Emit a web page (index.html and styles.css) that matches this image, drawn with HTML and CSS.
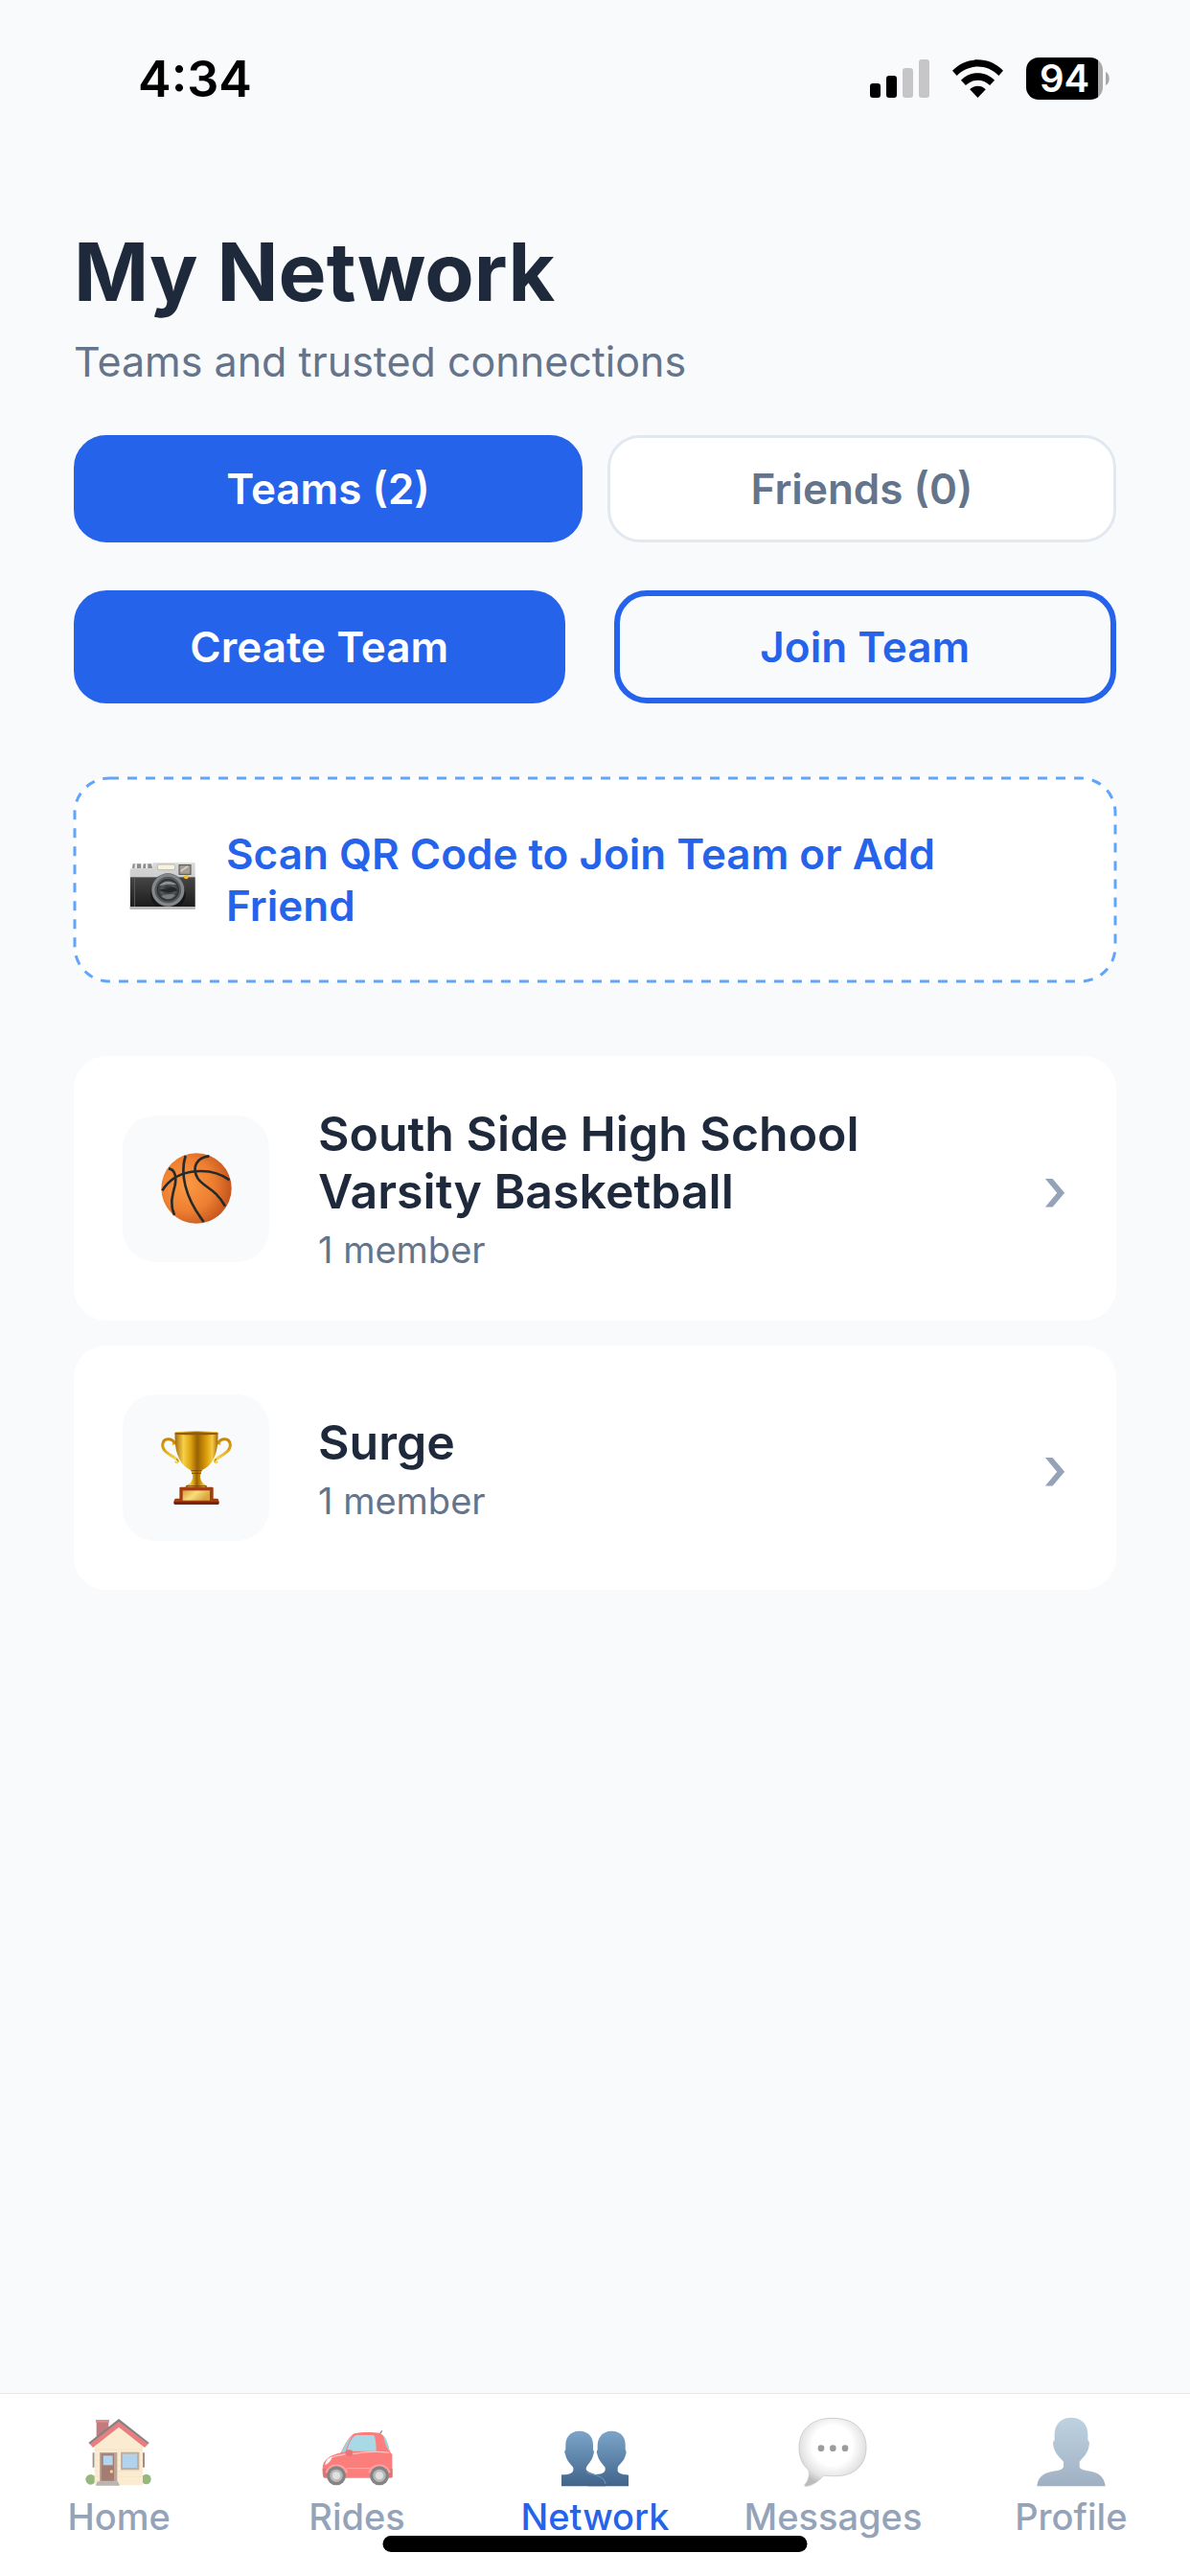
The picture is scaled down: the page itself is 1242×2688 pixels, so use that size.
FILE: index.html
```html
<!DOCTYPE html>
<html lang="en">
<head>
    <meta charset="UTF-8">
    <meta name="viewport" content="width=device-width, initial-scale=1.0">
    <title>My Network</title>
    <link rel="stylesheet" href="styles.css">
</head>
<body>
<header class="status-bar">
    <span class="time">4:34</span>
    <div class="status-icons">
        <svg class="signal" viewBox="0 0 62 40">
            <rect x="0" y="25" width="11" height="15" rx="3"/>
            <rect x="17" y="17" width="11" height="23" rx="3"/>
            <rect class="off" x="34" y="9" width="11" height="31" rx="3"/>
            <rect class="off" x="51" y="0" width="11" height="40" rx="3"/>
        </svg>
        <svg class="wifi" viewBox="402 66 160 120">
            <path d="M402 101C446 55 518 55 562 101L548 117C511 79 453 79 416 117Z"/>
            <path d="M429 131C458 101 506 101 535 131L520 147C498 126 466 126 444 147Z"/>
            <path d="M457 160C471 146 493 146 507 160L482 186Z"/>
        </svg>
        <div class="battery">
            <span class="battery-level">94</span>
            <svg class="battery-tip" viewBox="0 0 4 14"><path d="M0 0C5 2 5 12 0 14Z"/></svg>
        </div>
    </div>
</header>

<main class="content">
    <h1>My Network</h1>
    <p class="subtitle">Teams and trusted connections</p>

    <div class="tabs">
        <button class="tab active" type="button">Teams (2)</button>
        <button class="tab" type="button">Friends (0)</button>
    </div>

    <div class="actions">
        <button class="btn btn-primary" type="button">Create Team</button>
        <button class="btn btn-outline" type="button">Join Team</button>
    </div>

    <button class="scan" type="button">
        <svg class="scan-border" aria-hidden="true"><rect x="0" y="0" width="100%" height="100%" rx="36"/></svg>
        <svg class="camera" viewBox="54 84 252 183" aria-hidden="true">
            <defs>
                <linearGradient id="camTop" x1="0" y1="0" x2="0" y2="1">
                    <stop offset="0" stop-color="#d9d9d9"/>
                    <stop offset="1" stop-color="#b4b4b4"/>
                </linearGradient>
                <linearGradient id="camBody" x1="0" y1="0" x2="0" y2="1">
                    <stop offset="0" stop-color="#464646"/>
                    <stop offset="1" stop-color="#1c1c1c"/>
                </linearGradient>
                <radialGradient id="lens">
                    <stop offset="0" stop-color="#222"/>
                    <stop offset="0.6" stop-color="#55585a"/>
                    <stop offset="1" stop-color="#2b2d2f"/>
                </radialGradient>
            </defs>
            <path d="M86 124H112V140H84ZM119 124H144L148 140H117Z" fill="#8c8c8c"/>
            <path d="M92 124H99V140H91ZM126 124H133V140H126Z" fill="#e8e8e8"/>
            <path d="M77 144Q77 138 85 138H148V121H281V266H77Z" fill="url(#camTop)"/>
            <rect x="78" y="166" width="203" height="92" fill="url(#camBody)"/>
            <rect x="90" y="166" width="3" height="92" fill="#5a5a5a"/>
            <rect x="77" y="258" width="204" height="8" fill="#b9b9b9"/>
            <rect x="163" y="126" width="55" height="17" rx="5" fill="#f6f2df" stroke="#a5a39a" stroke-width="2"/>
            <rect x="231" y="128" width="36" height="29" fill="#a79f96" stroke="#4c4c4c" stroke-width="3"/>
            <path d="M236 147L258 132" stroke="#d5cdc3" stroke-width="5"/>
            <path d="M145 200a51 51 0 0 0 15 58h74a51 51 0 0 0 13-58Z" fill="#161616"/>
            <circle cx="196" cy="206" r="52" fill="#56595c"/>
            <circle cx="196" cy="206" r="46" fill="none" stroke="#85888b" stroke-width="9"/>
            <circle cx="196" cy="206" r="35" fill="url(#lens)"/>
            <path d="M168 193C180 176 207 174 223 190C207 187 187 187 168 193Z" fill="#8d9396"/>
            <path d="M175 226C187 219 207 217 219 222C208 238 188 238 175 226Z" fill="#777d80"/>
            <path d="M168 207C181 199 190 212 202 197C214 195 221 200 226 207C207 216 188 214 168 207Z" fill="#24272a"/>
            <circle cx="253" cy="165" r="7" fill="#fbbf1d"/>
        </svg>
        <span class="scan-text">Scan QR Code to Join Team or Add Friend</span>
    </button>

    <div class="team-list">
        <a class="team" href="#south-side">
            <span class="team-icon">
                <svg class="ball" viewBox="139 161 222 222" aria-hidden="true">
                    <defs>
                        <radialGradient id="ballFill" cx="0.36" cy="0.45" r="0.68">
                            <stop offset="0" stop-color="#fc9a45"/>
                            <stop offset="0.55" stop-color="#ee7f31"/>
                            <stop offset="1" stop-color="#bf501b"/>
                        </radialGradient>
                    </defs>
                    <circle cx="250" cy="272" r="110" fill="url(#ballFill)"/>
                    <g fill="none" stroke="#252a2a" stroke-width="8">
                        <path d="M143 279C160 251 189 229 230 221C278 213 321 222 354 246"/>
                        <path d="M216 170C199 223 212 298 273 377"/>
                        <path d="M163 210C183 212 189 237 182 266C172 303 168 326 181 356"/>
                        <path d="M290 171C251 175 234 206 254 240C272 269 309 271 340 328"/>
                    </g>
                </svg>
            </span>
            <span class="team-info">
                <span class="team-name">South Side High School Varsity Basketball</span>
                <span class="team-members">1 member</span>
            </span>
            <span class="chevron">›</span>
        </a>
        <a class="team" href="#surge">
            <span class="team-icon">
                <svg class="trophy" viewBox="135 145 228 234" aria-hidden="true">
                    <defs>
                        <linearGradient id="cup">
                            <stop offset="0" stop-color="#a66b08"/>
                            <stop offset="0.2" stop-color="#f5d04a"/>
                            <stop offset="0.36" stop-color="#e0a512"/>
                            <stop offset="0.52" stop-color="#996104"/>
                            <stop offset="0.72" stop-color="#d99a08"/>
                            <stop offset="0.87" stop-color="#f4ca42"/>
                            <stop offset="1" stop-color="#a16807"/>
                        </linearGradient>
                        <linearGradient id="handle" x1="0" y1="0" x2="0" y2="1">
                            <stop offset="0" stop-color="#c68708"/>
                            <stop offset="0.5" stop-color="#dba216"/>
                            <stop offset="1" stop-color="#f7d954"/>
                        </linearGradient>
                        <linearGradient id="plate" x1="0" y1="0" x2="1" y2="0.4">
                            <stop offset="0" stop-color="#d6a23b"/>
                            <stop offset="0.5" stop-color="#f9dc7d"/>
                            <stop offset="1" stop-color="#d9a43c"/>
                        </linearGradient>
                    </defs>
                    <g fill="none" stroke="url(#handle)" stroke-linecap="round">
                        <path d="M181 184C172 167 146 166 143 188C142 210 164 217 188 235" stroke-width="9"/>
                        <path d="M317 184C326 167 352 166 355 188C356 210 334 217 310 235" stroke-width="9"/>
                        <path d="M188 235C196 240 190 249 184 243M310 235C302 240 308 249 314 243" stroke-width="5"/>
                        <path d="M181 184L175 188M317 184L323 188" stroke-width="6"/>
                    </g>
                    <path d="M182 150H316C319 202 307 250 266 269H232C191 250 179 202 182 150Z" fill="url(#cup)"/>
                    <path d="M182 151Q249 144 316 151V156Q249 160 182 156Z" fill="#8f5a05"/>
                    <path d="M183 150Q249 144 315 150" fill="none" stroke="#e9bb35" stroke-width="3"/>
                    <path d="M232 267H266L264 276C258 286 262 301 270 309L282 318V326H215V318L229 309C237 301 240 286 234 276Z" fill="url(#cup)"/>
                    <path d="M232 270H266M234 278H264M217 318H280" stroke="#7c4a04" stroke-width="3"/>
                    <path d="M196 323Q196 321 200 321H298Q302 321 302 325V357H314Q320 359 320 371Q320 376 315 376H183Q178 376 178 371Q178 359 184 357H196Z" fill="#a23c11"/>
                    <path d="M179 367H319V372Q319 376 315 376H183Q179 376 179 372Z" fill="#74250a"/>
                    <rect x="206" y="332" width="85" height="31" fill="url(#plate)"/>
                </svg>
            </span>
            <span class="team-info">
                <span class="team-name">Surge</span>
                <span class="team-members">1 member</span>
            </span>
            <span class="chevron">›</span>
        </a>
    </div>
</main>

<nav class="tab-bar">
    <a class="nav-item" href="#home">
        <svg class="nav-icon" viewBox="258 126 228 219" aria-hidden="true">
            <ellipse cx="284" cy="322" rx="16" ry="16" fill="#4f8a2a"/>
            <ellipse cx="458" cy="321" rx="15" ry="16" fill="#4f8a2a"/>
            <path d="M290 238H296V284H290ZM447 238H453V284H447Z" fill="#5f463c"/>
            <rect x="302" y="136" width="38" height="60" fill="#9c2624"/>
            <rect x="300" y="135" width="42" height="8" fill="#c14340"/>
            <path d="M296 205L373 146L447 205V340H296Z" fill="#f7dfb4"/>
            <path d="M296 228H447M296 245H447M296 262H447M296 279H447M296 296H447M296 313H447" stroke="#ecd1a0" stroke-width="2"/>
            <path d="M372 132L467 207L460 214L372 145L285 214L277 207Z" fill="#303234"/>
            <path d="M372 141L464 211L453 222L372 158L291 222L281 211Z" fill="#d9292c"/>
            <rect x="312" y="237" width="55" height="92" fill="#8f6c55"/>
            <rect x="317" y="241" width="40" height="85" fill="#6b2615"/>
            <rect x="323" y="247" width="30" height="30" fill="#7fbbe2"/>
            <circle cx="349" cy="297" r="5" fill="#f0b93b"/>
            <rect x="378" y="236" width="58" height="56" fill="#9a795e"/>
            <rect x="384" y="242" width="45" height="43" fill="#82b5de"/>
            <path d="M305 328H369L375 341H300Z" fill="#8b8580"/>
        </svg>
        <span>Home</span>
    </a>
    <a class="nav-item" href="#rides">
        <svg class="nav-icon" viewBox="1002 126 228 219" aria-hidden="true">
            <path d="M1184 183L1193 169" stroke="#333" stroke-width="4"/>
            <path d="M1064 238C1078 210 1089 188 1106 178C1130 173 1164 173 1187 177C1202 184 1211 207 1218 235L1225 244V312Q1225 317 1218 317H1013Q1007 313 1007 303V288C1007 262 1026 247 1064 238Z" fill="#f92a28"/>
            <path d="M1083 233C1091 205 1100 188 1112 183H1166C1172 183 1175 214 1175 233Z" fill="#6fc0d6"/>
            <path d="M1066 236C1078 211 1090 191 1102 184C1092 198 1083 218 1079 236Z" fill="#5ab7cb"/>
            <path d="M1197 184C1209 197 1214 216 1216 235C1206 220 1200 201 1197 184Z" fill="#5ab7cb"/>
            <path d="M1020 262C1050 239 1098 244 1128 238C1160 234 1194 235 1216 238" fill="none" stroke="#ff9896" stroke-width="4"/>
            <path d="M1082 287H1156" stroke="#ff8080" stroke-width="3"/>
            <path d="M1015 277C1016 262 1025 253 1037 251C1034 263 1026 271 1015 277Z" fill="#f0f0f0"/>
            <ellipse cx="1090" cy="239" rx="12" ry="10" fill="#df191c"/>
            <path d="M1007 289H1020V316H1010ZM1214 289H1226V316H1216Z" fill="#c51b1b"/>
            <path d="M1015 301A37 34 0 0 1 1087 301ZM1149 301A37 34 0 0 1 1221 301Z" fill="#ff6262"/>
            <circle cx="1050" cy="310" r="30" fill="#333"/>
            <circle cx="1185" cy="310" r="30" fill="#333"/>
            <circle cx="1050" cy="310" r="20" fill="#8c8c8c"/>
            <circle cx="1185" cy="310" r="20" fill="#8c8c8c"/>
            <circle cx="1050" cy="310" r="12" fill="#ccc"/>
            <circle cx="1185" cy="310" r="12" fill="#ccc"/>
        </svg>
        <span>Rides</span>
    </a>
    <a class="nav-item active" href="#network">
        <svg class="nav-icon" viewBox="548 126 228 219" aria-hidden="true">
            <defs>
                <linearGradient id="people" gradientUnits="userSpaceOnUse" x1="0" y1="170" x2="0" y2="343">
                    <stop offset="0" stop-color="#7ba5c9"/>
                    <stop offset="1" stop-color="#41648a"/>
                </linearGradient>
            </defs>
            <path d="M714 170C741 170 757 188 757 213V229Q762 234 758 244C754 266 738 273 733 284V295C737 306 752 306 767 308V343H640V306C665 306 690 309 694 292V284C686 274 673 262 669 242Q665 235 670 229V213C671 188 688 170 714 170Z" fill="url(#people)"/>
            <path d="M613 170C640 170 656 188 656 213V229Q661 234 657 244C653 266 638 274 634 287C633 309 694 298 695 343H557V307C575 306 590 306 594 293V284C586 274 572 262 569 242Q564 235 570 229V213C570 188 587 170 613 170Z" fill="url(#people)"/>
            <path d="M636 299C647 309 690 304 695 336" fill="none" stroke="#6c9fbe" stroke-width="3"/>
        </svg>
        <span>Network</span>
    </a>
    <a class="nav-item" href="#messages">
        <svg class="nav-icon" viewBox="93 126 228 219" aria-hidden="true">
            <defs>
                <radialGradient id="bubble" cx="0.5" cy="0.4" r="0.6">
                    <stop offset="0.5" stop-color="#fff"/>
                    <stop offset="0.8" stop-color="#d2d2d2"/>
                    <stop offset="1" stop-color="#8e8e8e"/>
                </radialGradient>
            </defs>
            <path d="M207 130C273 130 312 165 312 222C312 278 273 311 219 311C203 311 190 311 179 309C163 328 145 341 123 343Q117 343 120 338C132 323 135 309 132 292C112 276 102 252 102 223C102 165 142 130 207 130Z" fill="url(#bubble)" stroke="#b0b0b0" stroke-width="3"/>
            <circle cx="171" cy="224" r="10" fill="#5c5c5c"/>
            <circle cx="208" cy="224" r="10" fill="#5c5c5c"/>
            <circle cx="246" cy="224" r="10" fill="#5c5c5c"/>
        </svg>
        <span>Messages</span>
    </a>
    <a class="nav-item" href="#profile">
        <svg class="nav-icon" viewBox="838 126 228 219" aria-hidden="true">
            <defs>
                <linearGradient id="person" x1="0" y1="0" x2="0" y2="1">
                    <stop offset="0" stop-color="#93b6ce"/>
                    <stop offset="1" stop-color="#617c9c"/>
                </linearGradient>
            </defs>
            <path d="M952 128C984 128 1004 149 1004 180V199Q1011 203 1008 215C1005 240 989 252 978 266V283C986 304 1052 282 1059 343H845C852 282 918 306 928 283V266C916 252 900 240 896 215Q893 203 900 199V180C900 149 921 128 952 128Z" fill="url(#person)"/>
        </svg>
        <span>Profile</span>
    </a>
    <div class="home-indicator"></div>
</nav>
</body>
</html>
```

FILE: styles.css
```css
* {
    margin: 0;
    padding: 0;
    font-family: 'Inter', sans-serif;
    box-sizing: border-box;
}
body {
    min-height: 100vh;
    display: flex;
    flex-direction: column;
    background: #f9fafc;
    color: #1e293b;
}
a {
    text-decoration: none;
    color: inherit;
}
button {
    background: transparent;
    border: 0;
    cursor: pointer;
}

/* Status bar */
.status-bar {
    display: flex;
    justify-content: space-between;
    align-items: center;
    height: 164px;
    padding: 0 84px 0 144px;
    color: #000;
}
.time {
    font-size: 52px;
    font-weight: 600;
}
.status-icons {
    display: flex;
    align-items: center;
    gap: 24px;
}
.signal {
    width: 62px;
    height: 40px;
}
.signal .off {
    fill: #c6c6c8;
}
.wifi {
    width: 53px;
    height: 40px;
}
.battery {
    display: flex;
    align-items: center;
    gap: 3px;
}
.battery-level {
    width: 80px;
    height: 44px;
    border-radius: 13px;
    background: linear-gradient(to right, #000 75px, #a9a9ab 75px);
    color: #fff;
    font-size: 40px;
    font-weight: 600;
    line-height: 44px;
    text-align: center;
}
.battery-tip {
    width: 4px;
    height: 14px;
    fill: #a9a9ab;
}

/* Page content */
.content {
    flex: 1;
    padding: 68px 77px;
}
h1 {
    font-size: 84px;
    font-weight: 700;
    line-height: 104px;
}
.subtitle {
    margin-top: 14px;
    color: #64748b;
    font-size: 43px;
    line-height: 54px;
}
.tabs {
    display: flex;
    gap: 26px;
    margin-top: 50px;
}
.tab {
    flex: 1;
    height: 112px;
    border: 3px solid #e2e8f0;
    border-radius: 34px;
    background: #fff;
    color: #64748b;
    font-size: 44px;
    font-weight: 600;
}
.tab.active {
    background: #2563eb;
    border-color: #2563eb;
    color: #fff;
}
.actions {
    display: flex;
    gap: 51px;
    margin-top: 50px;
}
.btn {
    flex: 1;
    height: 118px;
    border-radius: 34px;
    font-size: 44px;
    font-weight: 600;
}
.btn-primary {
    background: #2563eb;
    color: #fff;
}
.btn-outline {
    border: 6px solid #2563eb;
    color: #2563eb;
}
.scan {
    position: relative;
    display: flex;
    align-items: center;
    gap: 24px;
    width: 100%;
    margin-top: 77px;
    padding: 53px 51px;
    border-radius: 38px;
    background: #fff;
    color: #2563eb;
    text-align: left;
}
/* Dashed frame, drawn in svg for an even dash length */
.scan-border {
    position: absolute;
    inset: 1px;
    width: calc(100% - 2px);
    height: calc(100% - 2px);
    overflow: visible;
    fill: none;
    stroke: #60a5fa;
    stroke-width: 3px;
    stroke-dasharray: 10 9;
}
.camera {
    flex: none;
    width: 84px;
    height: 61px;
}
.scan-text {
    font-size: 44px;
    font-weight: 600;
    line-height: 54px;
}

/* Team cards */
.team-list {
    display: flex;
    flex-direction: column;
    gap: 26px;
    margin-top: 77px;
}
.team {
    display: flex;
    align-items: center;
    gap: 51px;
    padding: 51px;
    border-radius: 34px;
    background: #fff;
}
.team-icon {
    display: flex;
    flex: none;
    align-items: center;
    justify-content: center;
    width: 153px;
    height: 153px;
    border-radius: 34px;
    background: #f9fafc;
}
.ball {
    width: 74px;
    height: 74px;
}
.trophy {
    width: 76px;
    height: 78px;
}
.team-info {
    display: flex;
    flex: 1;
    flex-direction: column;
    gap: 8px;
}
.team-name {
    font-size: 50px;
    font-weight: 600;
    line-height: 60px;
}
.team-members {
    color: #64748b;
    font-size: 38px;
    line-height: 46px;
}
.chevron {
    color: #94a3b8;
    font-size: 64px;
    font-weight: 500;
}

/* Bottom navigation */
.tab-bar {
    position: relative;
    display: flex;
    height: 191px;
    padding-top: 24px;
    border-top: 1px solid #e2e8f0;
    background: #fff;
}
.nav-item {
    display: flex;
    flex: 1;
    flex-direction: column;
    align-items: center;
    gap: 8px;
    color: #94a3b8;
    font-size: 38px;
    font-weight: 500;
    line-height: 46px;
}
.nav-item.active {
    color: #2563eb;
}
.nav-icon {
    width: 76px;
    height: 73px;
    opacity: 0.6;
}
.nav-item.active .nav-icon {
    opacity: 1;
}
.home-indicator {
    position: absolute;
    left: 50%;
    bottom: 25px;
    width: 443px;
    height: 17px;
    border-radius: 9px;
    background: #000;
    transform: translateX(-50%);
}
```
